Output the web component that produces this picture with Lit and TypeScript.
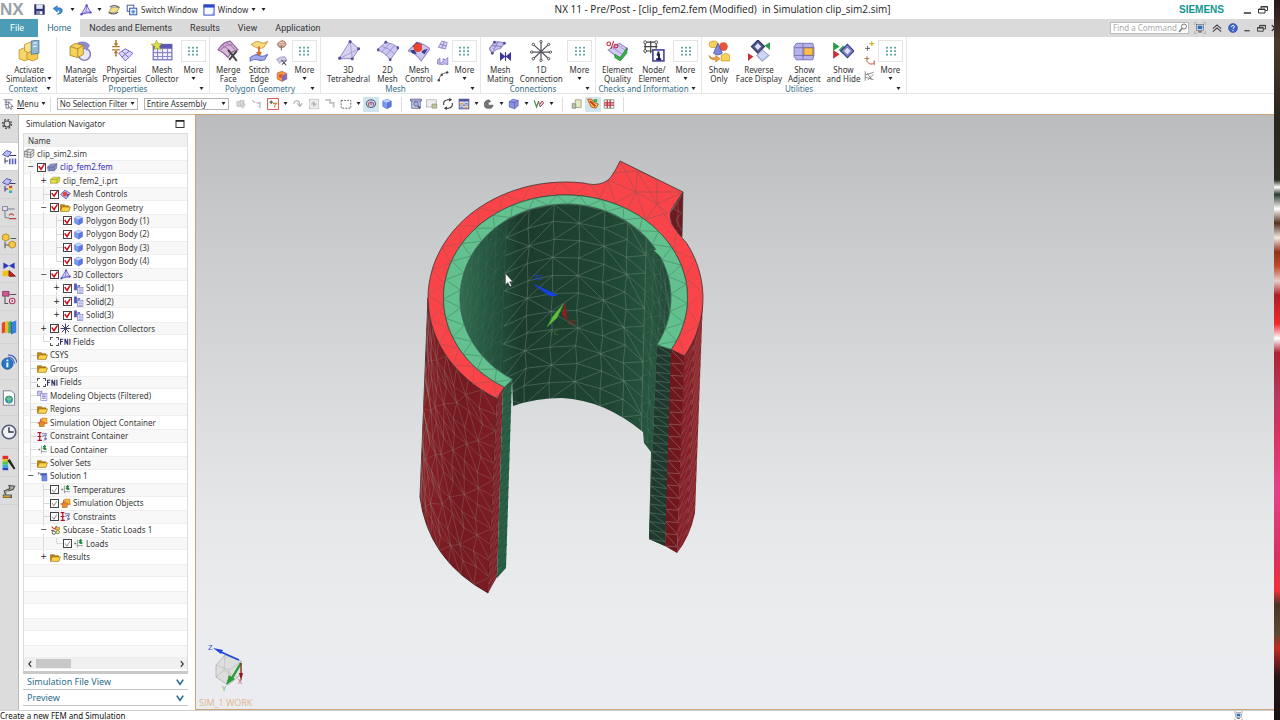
import { LitElement, html, svg, css, nothing } from "lit";
import { customElement } from "lit/decorators.js";
import { classMap } from "lit/directives/class-map.js";
import { styleMap } from "lit/directives/style-map.js";

/* ---------- icons ---------- */

const cube = svg`<path d="M3 5l7-3 7 3v9l-7 4-7-4z" fill="#7c9af0" stroke="#4a62c4"/><path d="M3 5l7 3 7-3-7-3z" fill="#c3d3ff"/><path d="M10 8l7-3v9l-7 4z" fill="#5876dc"/>`;
const folder = svg`<path d="M1 5h7l2 2h6v9H1z" fill="#c98a10" stroke="#7a5200"/><path d="M4 9h15l-3 8H1z" fill="#ffd54a" stroke="#8a6000"/>`;
const load = svg`<path d="M2 10h4M4 8v4M8 3v14M8 14h10" stroke="#555" fill="none"/><path d="M11 9l5-5M11 4l6 6M14 2v9" stroke="#1b8a3a" stroke-width="2.4"/>`;
const simobj = svg`<path d="M1 11h18M7 3v14" stroke="#c22" stroke-width="2"/><rect x="9" y="2" width="9" height="9" fill="#ffb53a" stroke="#b36b00"/><rect x="4" y="9" width="9" height="8" fill="#f08a28" stroke="#a85a00"/>`;
const constr = svg`<path d="M5 2v16M1 3h7M1 10h7M1 17h8" stroke="#b3122d" stroke-width="2.2"/><path d="M9 5h9M9 10l8-3-3 7h4l-6 3" stroke="#5c5fa8" fill="none" stroke-width="1.6"/>`;
const tets = svg`<path d="M2 17L11 2l7 12z" fill="#d9d3fb" stroke="#5a4fc0" stroke-width="1.4"/><path d="M11 2l-1 11-8 4M10 13l8 1" stroke="#5a4fc0" fill="none"/><circle cx="2.500" cy="17" r="2" fill="#5a4fc0"/><circle cx="11" cy="2.500" r="2" fill="#5a4fc0"/><circle cx="17.500" cy="14" r="2" fill="#5a4fc0"/>`;
const star = svg`<path d="M10 1v18M1 10h18M3.500 3.500l13 13M16.500 3.500l-13 13" stroke="#3f3f66" stroke-width="1.8"/>`;
const mon = svg`<path d="M1 5V1h4M15 1h4v4M19 15v4h-4M5 19H1v-4" fill="none" stroke="#999"/><rect x="4" y="4" width="12" height="10" fill="#eef" stroke="#555"/><rect x="6" y="6" width="8" height="6" fill="#2d6fb8"/><path d="M7 16.500h6" stroke="#555" stroke-width="2"/>`;

const I: Record<string, unknown> = {
  cube, folder, load, simobj, constr, tets, star, mon,
  save: svg`<path d="M2 2h14l2 2v14H2z" fill="#2b2f6b"/><rect x="5" y="2" width="10" height="7" fill="#dfe6f5"/><rect x="5" y="12" width="10" height="6" fill="#8990b8"/><rect x="11" y="13" width="3" height="4" fill="#fff"/>`,
  undo: svg`<path d="M3 8l6-4v3q8-1 7 5-1 4-7 4 5-2 3-5-1-1-3-1v3z" fill="#3c8ed8" stroke="#1d5fa8" stroke-width=".8"/>`,
  eraser: svg`<path d="M2 14l5-8h11l-5 8z" fill="#f3e07a" stroke="#777"/><path d="M4 6q6-5 13 0M16 13q-6 5-13 1" stroke="#555" stroke-width="1.500" fill="none"/>`,
  switchwin: svg`<rect x="2" y="2" width="11" height="10" fill="#fff" stroke="#3a5aa0" stroke-width="1.6"/><rect x="6" y="7" width="12" height="11" fill="#dde8fb" stroke="#3a5aa0" stroke-width="1.6"/><path d="M9 13h6M12 10v6" stroke="#2b6fc0" stroke-width="1.6"/>`,
  win: svg`<rect x="1.500" y="1.500" width="17" height="17" fill="#f4f8ff" stroke="#2d48c8" stroke-width="1.6"/><path d="M1 1h18v5H1z" fill="#2d48c8"/><path d="M14 18q4-1 4-5" fill="#bcd" stroke="#789"/>`,
  activate: svg`<path d="M1 9l5-2 5 2v8l-5 2-5-2z" fill="#f8d66a" stroke="#b88d22" stroke-width=".7"/><path d="M6 4l5-2 5 2v6l-5 2-5-2z" fill="#fbe28c" stroke="#b88d22" stroke-width=".7"/><path d="M8 12l5-2 5 2v5l-5 2-5-2z" fill="#f3c94e" stroke="#b88d22" stroke-width=".7"/><path d="M12 1l7-1v12l-7 1z" fill="#8fb7d6" stroke="#4d7799" stroke-width=".8"/><path d="M14 3l3-.5M14 6l3-.5" stroke="#fff"/>`,
  materials: svg`<circle cx="14" cy="13" r="5.500" fill="#e8e8f6" stroke="#7d7db5" stroke-width="1.3"/><path d="M8 2q8-2 11 3l-3 5q-2-5-8-4z" fill="#8d8ad0"/><path d="M1 6l5-3 7 2v8l-5 3-7-2z" fill="#f5d25c" stroke="#ae861e" stroke-width=".8"/><path d="M1 6l7 2 5-3M8 8v8" stroke="#ae861e" fill="none" stroke-width=".8"/>`,
  physical: svg`<g stroke="#6c62c4" stroke-width=".8" fill="#d9d5f8"><path d="M7 12l6-4 7 4-7 7z"/><path d="M10 10l6 6M16.500 10L10 15.500"/></g><path d="M1 6h7M1 9h7" stroke="#b07a2a" stroke-width="1.2"/><path d="M4.500 0v4M4.500 15v-4" stroke="#b07a2a" stroke-width="1.4"/><path d="M2.500 3h4l-2 3zM2.500 12h4l-2-3z" fill="#b07a2a"/>`,
  collector: svg`<rect x="2" y="4" width="17" height="14" fill="#f4f2ff" stroke="#635fb5"/><path d="M2 4h17v4H2z" fill="#5c58b0"/><path d="M2 11.500h17M2 15h17M6 8v10M10.500 8v10M15 8v10" stroke="#8a86cc"/><path d="M5 0l1.500 3.500L10 3 7.500 6 9 9 5.500 7.500 3 9l.5-3L0 4l3.500-.5z" fill="#d9e04a" stroke="#8fa020" stroke-width=".5"/>`,
  merge: svg`<path d="M1 9Q5 2 12 1q3 3 7 8-6 1-9 7-4-5-9-7z" fill="#d8b8d8" stroke="#8c6098"/><path d="M5 5q6 3 9 8M9 3q6 3 8 7M3 9q5-5 11-5" stroke="#a87bb4" fill="none"/><path d="M10 9l8 10M18 10l-7 8" stroke="#444" stroke-width="1.8"/>`,
  stitch: svg`<path d="M3 4q5-4 8-2 4 2 7-1l-4 6q-4 1-6 0-3-1-5-3z" fill="#f8dc7c" stroke="#d0a860"/><path d="M10 6v7M8 11l2 3 2-3" stroke="#d0702a" stroke-width="1.6" fill="none"/><path d="M2 16q5-4 8-2 4 2 8-1l-3 5q-4 1-6 0-3-1-7 1z" fill="#a5abec" stroke="#6a70c4"/>`,
  p1: svg`<path d="M2 7q4-6 9-6 5 1 6 6-2 6-8 6-5 0-7-6z" fill="#cf9f86" stroke="#8a5a48"/><path d="M9 7v10" stroke="#777" stroke-width="2"/><path d="M6 4h7M5 8h9" stroke="#fff"/>`,
  p2: svg`<path d="M1 7q6-5 14-4l3 6q-8-1-12 5z" fill="#cfcbe8" stroke="#7773a8"/><path d="M9 8l8 9M17 9l-7 7" stroke="#555" stroke-width="1.7"/>`,
  p3: svg`<path d="M2 5l8-3 8 4v9l-8 4-8-4z" fill="#f0984a" stroke="#a85a20"/><path d="M10 9l8-3v9l-8 4z" fill="#8068c0"/><circle cx="8" cy="10" r="3.500" fill="#e05a30"/>`,
  tet3d: svg`<path d="M1 17L11 1l8 7-6 9z" fill="#d6d2f2" stroke="#8f8ab8" stroke-width=".9"/><path d="M11 1l2 16M1 17l18-9" stroke="#9a95cc" stroke-width=".7" fill="none"/><g fill="#57519c"><circle cx="11" cy="1.500" r="1.400"/><circle cx="1.500" cy="16.500" r="1.400"/><circle cx="18.700" cy="8" r="1.400"/><circle cx="13" cy="17" r="1.400"/></g>`,
  mesh2d: svg`<path d="M0 9L8 2q6 1 12 5l-8 11Q7 11 0 9z" fill="#cdc8f2" stroke="#8f8ac4" stroke-width=".9"/><path d="M4 5.500q7 2 12 7M12 3q-4 4-8 8M16 5L8 14" stroke="#8a84c4" stroke-width=".7" fill="none"/><g fill="#57519c"><circle cx="8" cy="2" r="1.300"/><circle cx="1" cy="9" r="1.300"/><circle cx="19" cy="7" r="1.300"/><circle cx="12" cy="18" r="1.300"/></g>`,
  control: svg`<path d="M0 10L8 2q6 1 12 6l-8 11Q7 12 0 10z" fill="#cdc8f2" stroke="#8f8ac4"/><path d="M8 2l5 2-4 4-5-2zM14 9l4-1-3 5-3-2zM2 9l4 0 2 4-4-1z" fill="#3d3a88"/><circle cx="9" cy="7" r="4" fill="#e8452e"/>`,
  m1: svg`<path d="M2 12l6-10 9 2-3 11z" fill="#d9d5f5" stroke="#5f58a8"/><path d="M5 7l10 3M12 3L8 14" stroke="#5f58a8"/>`,
  m2: svg`<path d="M1 8l4-3v9l5-3V6l4 2 4-4v12l-5-1-4 1-8-1z" fill="#c5bff0" stroke="#5f58a8"/>`,
  m3: svg`<path d="M3 18Q4 6 17 4" stroke="#555" stroke-width="1.500" fill="none"/><g fill="#444"><circle cx="3" cy="17" r="2"/><circle cx="8" cy="8" r="2"/><circle cx="17" cy="4" r="2"/></g>`,
  mating: svg`<path d="M0 8l5-6q5-1 9 1l-4 5q-4 0-7 4z" fill="#c9c4f0" stroke="#8a84c0"/><path d="M3 5l9 1M8 2L4 9" stroke="#8a84c0"/><g fill="#57519c"><circle cx="5" cy="2" r="1.300"/><circle cx="14" cy="3" r="1.300"/><circle cx="3" cy="12" r="1.300"/></g><path d="M10 11l5 4-5 4zM20 11l-5 4 5 4z" fill="#3b35a0"/><path d="M15 11v8" stroke="#3b35a0"/>`,
  conn1d: svg`<path d="M10 1v18M1 11h18M3 4l14 13M17 4L3 17" stroke="#55555c" stroke-width="1.1"/><g fill="#fff" stroke="#444" stroke-width=".8"><circle cx="10" cy="1.500" r="1.100"/><circle cx="10" cy="18.500" r="1.100"/><circle cx="1.500" cy="11" r="1.100"/><circle cx="18.500" cy="11" r="1.100"/><circle cx="3" cy="4" r="1.100"/><circle cx="17" cy="4" r="1.100"/><circle cx="3" cy="17" r="1.100"/><circle cx="17" cy="17" r="1.100"/></g>`,
  quality: svg`<path d="M2 9l10-6 8 5-8 9z" fill="#d0caf0" stroke="#8f8ac4"/><path d="M6 7l9 6M10 4l8 6" stroke="#8a84c4" stroke-width=".7"/><path d="M8 13l5 3 6-9v5l-6 7-5-3z" fill="#35b34a" stroke="#1c7a30" stroke-width=".6"/><g fill="none" stroke="#c8283c" stroke-width="1"><circle cx="2.500" cy="3.500" r="1.700"/><path d="M7 1L4.500 8"/><circle cx="9" cy="5.500" r="1.700"/></g>`,
  node: svg`<path d="M1 2h12M1 10h9M2 1v11M7 1v11M12 1v7M1 6h12" stroke="#444" stroke-width="1.1" fill="none"/><g fill="#fff" stroke="#444" stroke-width=".8"><circle cx="2" cy="2" r="1.300"/><circle cx="12" cy="2" r="1.300"/><circle cx="2" cy="10" r="1.300"/></g><rect x="9" y="9" width="10" height="10" fill="#fff" stroke="#4b489c" stroke-width="1.500"/><path d="M14 10.500v2M12.500 13.500h2V17M12 17.500h4.500" stroke="#1b1a50" stroke-width="1.800" fill="none"/>`,
  showonly: svg`<ellipse cx="5" cy="4" rx="4" ry="3" fill="#f7d25a" stroke="#b98c1e" stroke-width=".6"/><circle cx="14" cy="6" r="4" fill="#e8553a"/><path d="M5 12l4-9 4 9q-4 3-8 0z" fill="#8086dc" stroke="#4a4fa8" stroke-width=".7"/><path d="M1 14q2 3 6 2v-2l4 3-4 3v-2q-6 0-6-4z" fill="#f0a040" stroke="#b06a18" stroke-width=".5"/><path d="M12 14l4-2 4 2v5h-8z" fill="#f7d25a" stroke="#b98c1e" stroke-width=".6"/>`,
  reverse: svg`<path d="M3 6l6-6 6 6-6 6z" fill="#55598f" stroke="#2e3166"/><path d="M6 6l3-3 3 3-3 3z" fill="#dfe1fb"/><path d="M8 14l5-5 6 5-6 5z" fill="#cfd5f5" stroke="#9aa2d0"/><path d="M20 2v7l-5-4z" fill="#2f9a4a"/><path d="M0 12v7l5-4z" fill="#c8313c"/>`,
  adjacent: svg`<path d="M3 3h15l1 4v7l-1 4H3l-2-3V6z" fill="#b5b2ea" stroke="#6f6cb8" stroke-width=".8"/><path d="M10 7h8v7h-8z" fill="#ffc04a" stroke="#b97a18" stroke-width=".8"/><path d="M1 7h18M1 14h18M9 3v15" stroke="#6f6cb8" stroke-width=".8"/>`,
  hide: svg`<path d="M1 2l6 4-6 4z" fill="#2f9a4a"/><path d="M1 9l6 4-6 4z" fill="#c8313c"/><path d="M6 9l4-4 4 4-4 4z" fill="#3aa655"/><path d="M8 10l6-6 6 6-6 6z" fill="#7d82cf" stroke="#3a3f8a"/><path d="M11 10l3-3 3 3-3 3z" fill="#dfe1fb"/>`,
  u1: svg`<path d="M2 14h8M6 10v8" stroke="#555" stroke-width="1.500"/><path d="M13 2v8M9 6h8" stroke="#c8b030" stroke-width="1.800"/>`,
  u2: svg`<path d="M5 2v10M1 6h8" stroke="#a86a3a" stroke-width="1.500"/><path d="M6 12q6 6 11 1M17 9v8" stroke="#c8513c" stroke-width="1.600" fill="none"/>`,
  u3: svg`<path d="M2 2v16M2 8l14-4M2 12l14 4M6 17L16 7M5 5l8 11" stroke="#666" stroke-width="1.200"/>`,
  more: svg`<g fill="#4f9a9a"><rect x="3" y="4" width="2.500" height="2.500"/><rect x="8.750" y="4" width="2.500" height="2.500"/><rect x="14.500" y="4" width="2.500" height="2.500"/><rect x="3" y="9" width="2.500" height="2.500"/><rect x="8.750" y="9" width="2.500" height="2.500"/><rect x="14.500" y="9" width="2.500" height="2.500"/><rect x="3" y="14" width="2.500" height="2.500"/><rect x="8.750" y="14" width="2.500" height="2.500"/><rect x="14.500" y="14" width="2.500" height="2.500"/></g>`,
  menu: svg`<path d="M1 3h15M3 7h9M3 11h6M5 3v14h4" stroke="#7a7a92" stroke-width="1.600" fill="none"/><path d="M9 7l8 7-4 0 2 4-2 1-2-4-2 2z" fill="#fff" stroke="#44445c"/>`,
  g1: svg`<path d="M3 6h7v8H3zM8 4h7v7M12 8l5 3-4 6-4-4" fill="#d6d6d6" stroke="#b0b0b0"/>`,
  g2: svg`<path d="M2 4l5 4M9 8h8M13 8l3 5M13 13l3 4" stroke="#b8b8b8" stroke-width="2" fill="none"/>`,
  g3: svg`<rect x="1" y="1" width="18" height="18" fill="#fff" stroke="#d8423c" stroke-width="1.500"/><path d="M4 7h6M7 4v6" stroke="#444" stroke-width="1.600"/><path d="M10 9h6l-3 3v4" stroke="#d08030" stroke-width="1.800" fill="none"/>`,
  g4: svg`<path d="M3 10q1-7 8-5l2 6M9 9l4 5 4-5" stroke="#aaa" stroke-width="1.800" fill="none"/>`,
  g5: svg`<rect x="2" y="2" width="16" height="16" fill="#eee" stroke="#b4b4b4"/><path d="M10 5v10M5 10h10M7 7l6 6" stroke="#a8a8a8" stroke-width="1.500"/>`,
  g6: svg`<path d="M2 3h8v5h6v8" stroke="#c0c0c0" stroke-width="3" fill="none"/>`,
  lasso: svg`<rect x="2" y="4" width="16" height="13" fill="none" stroke="#555" stroke-width="1.500" stroke-dasharray="3 2"/>`,
  snap: svg`<path d="M2 10q1-7 8-7t8 7q-1 6-8 6t-8-6z" fill="#cdd3e6" stroke="#4e5575" stroke-width="1.600"/><path d="M5 9q5-4 10 0M6 13V9M14 13V9M10 12V7" stroke="#a04060" stroke-width="1.500" fill="none"/>`,
  v1: svg`<path d="M1 2h18v3H1zM3 5v12h14V5" fill="#e4e4fa" stroke="#55558c" stroke-width="1.500"/><circle cx="10" cy="10" r="4" fill="#9fb2e8" stroke="#334"/><path d="M13 13l4 4" stroke="#334" stroke-width="2"/>`,
  v2: svg`<rect x="1" y="3" width="16" height="12" fill="#eee" stroke="#999"/><path d="M10 10h8v7h-8z" fill="#b8c890" stroke="#888"/>`,
  v3: svg`<path d="M3 12Q1 4 10 3h3M17 8q2 8-7 9H7" stroke="#333" stroke-width="1.800" fill="none"/><path d="M12 0l5 3-5 3zM8 14l-5 3 5 3z" fill="#333"/>`,
  v4: svg`<rect x="2" y="2" width="16" height="16" fill="#fff" stroke="#3e4680" stroke-width="1.500"/><path d="M2 2h16v4H2z" fill="#4e56a0"/><path d="M2 12h16M10 6v12" stroke="#3e4680"/><path d="M4 8h4v3H4zM12 14h4v3h-4z" fill="#e08a30"/><path d="M12 8h4v3h-4zM4 14h4v3H4z" fill="#5a78d8"/>`,
  v5: svg`<path d="M3 15Q0 4 10 3l3 3q-6 1-4 6l8 0-3 5H6z" fill="#777" stroke="#444"/>`,
  v6: svg`<path d="M2 6l6-4 9 2v9l-6 5-9-3z" fill="#8c94e0" stroke="#4a4fa8"/><path d="M2 6l9 2 6-4M11 8v10" stroke="#4a4fa8" fill="none"/>`,
  v7: svg`<path d="M2 4l4 11 3-9" stroke="#3f8a4a" stroke-width="2" fill="none"/><path d="M9 5l3 10 6-7-3-3-3 5" stroke="#a0404c" stroke-width="1.600" fill="#ddd"/>`,
  w1: svg`<path d="M7 3h10v13H7z" fill="#e4e9c8" stroke="#77804a"/><path d="M2 9l6 1v7H2z" fill="#b8c8a0" stroke="#667"/>`,
  w2: svg`<path d="M1 2h7l3 5 8 3-4 7-8-2z" fill="#f2d23c" stroke="#b3302c" stroke-width="1.300"/><path d="M5 5l9 9" stroke="#d03030" stroke-width="3"/><path d="M11 2h6v5h-6z" fill="#4aa84a"/>`,
  w3: svg`<path d="M2 3h16v14H2z" fill="#fff" stroke="#2d7a3c"/><path d="M2 8h16M2 12h16M7 3v14M12 3v14" stroke="#c02a38" stroke-width="2"/>`,
  gear: svg`<circle cx="10" cy="10" r="5" fill="none" stroke="#444" stroke-width="2"/><circle cx="10" cy="10" r="7.500" fill="none" stroke="#444" stroke-width="2.200" stroke-dasharray="2.900 3"/>`,
  nav1: svg`<path d="M2 7l5-5 6 2-4 6z" fill="#b9bdf2" stroke="#4b50b4" stroke-width="1.200"/><path d="M11 8h8M5 11v7M5 15h4" stroke="#3a3a70" stroke-width="1.300"/><path d="M10 12h2v7h-2zM13.500 12h2v7h-2zM17 12h2v7h-2z" fill="#5a60c0"/>`,
  nav2: svg`<path d="M2 7l5-5 6 2-4 6z" fill="#b9bdf2" stroke="#4b50b4" stroke-width="1.200"/><path d="M11 8h7M5 11v7M5 15h4" stroke="#3a3a70" stroke-width="1.300"/><path d="M10 11h4v3h-4z" fill="#e04030"/><path d="M10 14h4v3h-4z" fill="#f0d030"/><path d="M10 17h4v3h-4z" fill="#38b0d0"/>`,
  nav3: svg`<rect x="2" y="2" width="6" height="5" fill="#dfe2ee" stroke="#70768c"/><path d="M5 7v9h5M8 5h9" stroke="#70768c" stroke-width="1.200" fill="none"/><path d="M10 13q3-4 6 0M10 17h9" stroke="#c04040" stroke-width="1.500" fill="none"/>`,
  nav4: svg`<path d="M2 3l4-2 4 2v5l-4 2-4-2zM10 12l4-2 4 2v5l-4 2-4-2z" fill="#f6c844" stroke="#a87c14"/><path d="M5 11v8M5 15h5M12 7h7" stroke="#555" stroke-width="1.300"/>`,
  nav5: svg`<path d="M3 2l7 4-7 4zM17 2l-7 4 7 4z" fill="#2c38b8"/><path d="M2 12h8v7H2z" fill="#f2c020"/><path d="M10 19v-7l8 7z" fill="#d02020" stroke="#601010"/>`,
  nav6: svg`<path d="M2 3h8v6H2z" fill="#d05a90" stroke="#803058"/><path d="M5 10v8h4M11 7h8" stroke="#555" stroke-width="1.300" fill="none"/><circle cx="14" cy="15" r="3.500" fill="#f2e4ea" stroke="#b03060" stroke-width="1.300"/><circle cx="14" cy="15" r="1.200" fill="#b03060"/>`,
  books: svg`<path d="M1 5l4-2v14l-4 1z" fill="#e04a30"/><path d="M5 4l4-2v15l-4 1z" fill="#f2b82c"/><path d="M9 4l4-2v15l-4 1z" fill="#46b04c"/><path d="M13 4l6-2v15l-6 2z" fill="#3b7fe0"/><path d="M13 4v15" stroke="#174a9c"/>`,
  info: svg`<circle cx="8" cy="12" r="7" fill="#2576c8" stroke="#14508c"/><path d="M8 7v2M8 10.500v6" stroke="#fff" stroke-width="2.400"/><path d="M9 4q6 0 8 8M9 1q9 0 11 10" stroke="#4464c8" stroke-width="1.500" fill="none"/>`,
  web: svg`<path d="M3 1h10l4 4v14H3z" fill="#fff" stroke="#667"/><circle cx="10" cy="12" r="4.500" fill="#3c9ac8" stroke="#286"/><path d="M7 10q3 4 6 0M10 8v8" stroke="#7fd070" stroke-width="1.500" fill="none"/>`,
  clock: svg`<circle cx="10" cy="10" r="8.500" fill="#f2f4fb" stroke="#555c78" stroke-width="2"/><path d="M10 4v6h6" stroke="#333" stroke-width="1.800" fill="none"/>`,
  rainbow: svg`<path d="M2 1h7v4H2z" fill="#e03030"/><path d="M2 5h7v3H2z" fill="#f0c020"/><path d="M2 8h7v4H2z" fill="#50c840"/><path d="M2 12h7v4H2z" fill="#30b0d8"/><path d="M2 16h7v3H2z" fill="#3040c0"/><path d="M8 7l3-2 7 12-2 1z" fill="#222"/>`,
  robot: svg`<path d="M3 18h10v-3H3zM6 15l-2-5 7-3-1-4 7 1-2 4-6 2" fill="#b4b4b0" stroke="#55554c" stroke-width="1.500"/><path d="M3 17h8" stroke="#d0a020" stroke-width="2"/>`,
  sim: svg`<path d="M1 6l6-4 11 1v11l-6 4-11-2z" fill="#e6e6e6" stroke="#555"/><path d="M1 6l11 2 6-5M12 8v10M6 7v10M1 11l11 2 6-5M9 2L4 6.500" stroke="#555" fill="none"/>`,
  fem: svg`<path d="M1 9l5-5 12-1-1 9-4 4H2z" fill="#8e97cc" stroke="#4a4f80"/><path d="M1 9h12l5-6M13 9v7M5 9v7M9 9v7" stroke="#4a4f80" fill="none"/>`,
  prt: svg`<path d="M1 8l5-4h12l-1 8-4 3H1z" fill="#e0e040" stroke="#8a8a2a"/><path d="M1 8h12l5-4M13 8v7" stroke="#8a8a2a" fill="none"/>`,
  mc: svg`<path d="M1 10L9 2l10 6-8 10z" fill="#b8b0ea" stroke="#3a3488"/><circle cx="9" cy="9" r="4" fill="#e04838"/><path d="M13 10l4-1-4 5z" fill="#2e2b78"/>`,
  solid: svg`<path d="M2 1h5v12H2zM8 4h5v3H8z" fill="#5057b4"/><rect x="8" y="8" width="10" height="11" fill="#f0f2ff" stroke="#5860b8"/><path d="M10 11h6M10 14h6M10 17h6" stroke="#5860b8"/>`,
  field: svg`<path d="M1 5v11M1 6h5M1 10h4M9 5v11M9 5l5 11M14 5v11M18 5v11" stroke="#33336a" stroke-width="2"/>`,
  modeling: svg`<path d="M1 2h8v8H1z" fill="#c8c4f4" stroke="#6660c0"/><rect x="7" y="6" width="11" height="13" fill="#fff" stroke="#6660c0"/><path d="M9 9h7M9 12h7M9 15h7" stroke="#6660c0" stroke-width="1.500"/>`,
  solution: svg`<path d="M1 4h5M3 2v5" stroke="#555"/><path d="M6 4h12v4H6z" fill="#3c58c0"/><path d="M9 8h9v10H9z" fill="#6f8ae4" stroke="#3c58c0"/>`,
  subcase: svg`<path d="M3 3l4 4M12 2l-4 6M2 10h5" stroke="#c83030" stroke-width="2"/><path d="M10 4h7v5h-7z" fill="#f2c040" stroke="#806010"/><circle cx="7" cy="14" r="3" fill="#fff" stroke="#444" stroke-width="1.500"/><circle cx="14" cy="13" r="3" fill="#ff8" stroke="#664" stroke-width="1.500"/>`,
  minimize: svg`<path d="M3 15h12" stroke="#333" stroke-width="2.500"/>`,
  restore: svg`<path d="M6 7V3h13v8h-4M6 4h13" fill="none" stroke="#333" stroke-width="2"/><path d="M1 8h13v8H1zM1 9h13" fill="none" stroke="#333" stroke-width="2"/>`,
  search: svg`<circle cx="12" cy="7" r="5" fill="#fff" stroke="#777" stroke-width="2"/><path d="M8 11l-6 7" stroke="#777" stroke-width="3"/>`,
  up: svg`<path d="M3 11l7-6 7 6M3 16l7-6 7 6" fill="none" stroke="#444" stroke-width="1.800"/>`,
  help: svg`<circle cx="10" cy="10" r="9" fill="#3f63c8" stroke="#27408c"/><path d="M7 8q0-3 3-3t3 2.500q0 1.500-3 3.500v1M10 14v2.400" stroke="#fff" stroke-width="2" fill="none"/>`,
  chevron: svg`<path d="M2 4l8 12 8-12" fill="none" stroke="#27698a" stroke-width="4"/>`,
  square: svg`<rect x="2" y="3" width="16" height="14" fill="#fff" stroke="#222" stroke-width="1.800"/><path d="M2 4h16" stroke="#222" stroke-width="3"/>`,
  left: svg`<path d="M13 3l-6 7 6 7" fill="none" stroke="#333" stroke-width="3"/>`,
  right: svg`<path d="M7 3l6 7-6 7" fill="none" stroke="#333" stroke-width="3"/>`,
  close: svg`<path d="M2 3l14 14M16 3L2 17" stroke="#222" stroke-width="3"/>`,
};

const icon = (name: string, size = 12) =>
  html`<svg class="icon" width=${size} height=${size} viewBox="0 0 20 20" aria-hidden="true">${I[name]}</svg>`;
const caret = html`<svg class="caret" width="5" height="4" viewBox="0 0 5 4" aria-hidden="true"><path d="M.5 0h4L2.500 3z" fill="#222" /></svg>`;

/* ---------- ribbon ---------- */

type Cmd = { icon: string; label: string[]; drop?: boolean } | { stack: string[] } | { more: true };
interface Group { name: string; width: number; items: Cmd[]; }

const c = (i: string, ...label: string[]): Cmd => ({ icon: i, label });
const more: Cmd = { more: true };

const GROUPS: Group[] = [
  { name: "Context", width: 57, items: [{ icon: "activate", label: ["Activate", "Simulation"], drop: true }] },
  { name: "Properties", width: 153, items: [c("materials", "Manage", "Materials"), c("physical", "Physical", "Properties"), c("collector", "Mesh", "Collector"), more] },
  { name: "Polygon Geometry", width: 111, items: [c("merge", "Merge", "Face"), c("stitch", "Stitch", "Edge"), { stack: ["p1", "p2", "p3"] }, more] },
  { name: "Mesh", width: 160, items: [c("tet3d", "3D", "Tetrahedral"), c("mesh2d", "2D", "Mesh"), c("control", "Mesh", "Control"), { stack: ["m1", "m2", "m3"] }, more] },
  { name: "Connections", width: 115, items: [c("mating", "Mesh", "Mating"), c("conn1d", "1D", "Connection"), more] },
  { name: "Checks and Information", width: 106, items: [c("quality", "Element", "Quality"), c("node", "Node/", "Element"), more] },
  { name: "Utilities", width: 205, items: [c("showonly", "Show", "Only"), c("reverse", "Reverse", "Face Display"), c("adjacent", "Show", "Adjacent"), c("hide", "Show", "and Hide"), { stack: ["u1", "u2", "u3"] }, more] },
];

/* ---------- navigator tree ---------- */

type Check = "on" | "soft" | "none";
interface Row { t: string; d: number; i: string; open?: "+" | "-"; check?: Check; link?: boolean; }

const ROWS: Row[] = [
  { t: "clip_sim2.sim", d: 0, i: "sim" },
  { t: "clip_fem2.fem", d: 1, i: "fem", open: "-", check: "on", link: true },
  { t: "clip_fem2_i.prt", d: 2, i: "prt", open: "+" },
  { t: "Mesh Controls", d: 2, i: "mc", check: "on" },
  { t: "Polygon Geometry", d: 2, i: "folder", open: "-", check: "on" },
  { t: "Polygon Body (1)", d: 3, i: "cube", check: "on" },
  { t: "Polygon Body (2)", d: 3, i: "cube", check: "on" },
  { t: "Polygon Body (3)", d: 3, i: "cube", check: "on" },
  { t: "Polygon Body (4)", d: 3, i: "cube", check: "on" },
  { t: "3D Collectors", d: 2, i: "tets", open: "-", check: "on" },
  { t: "Solid(1)", d: 3, i: "solid", open: "+", check: "on" },
  { t: "Solid(2)", d: 3, i: "solid", open: "+", check: "on" },
  { t: "Solid(3)", d: 3, i: "solid", open: "+", check: "on" },
  { t: "Connection Collectors", d: 2, i: "star", open: "+", check: "on" },
  { t: "Fields", d: 2, i: "field", check: "none" },
  { t: "CSYS", d: 1, i: "folder" },
  { t: "Groups", d: 1, i: "folder" },
  { t: "Fields", d: 1, i: "field", check: "none" },
  { t: "Modeling Objects (Filtered)", d: 1, i: "modeling" },
  { t: "Regions", d: 1, i: "folder" },
  { t: "Simulation Object Container", d: 1, i: "simobj" },
  { t: "Constraint Container", d: 1, i: "constr" },
  { t: "Load Container", d: 1, i: "load" },
  { t: "Solver Sets", d: 1, i: "folder" },
  { t: "Solution 1", d: 1, i: "solution", open: "-" },
  { t: "Temperatures", d: 2, i: "load", check: "soft" },
  { t: "Simulation Objects", d: 2, i: "simobj", check: "soft" },
  { t: "Constraints", d: 2, i: "constr", check: "soft" },
  { t: "Subcase - Static Loads 1", d: 2, i: "subcase", open: "-" },
  { t: "Loads", d: 3, i: "load", check: "soft" },
  { t: "Results", d: 2, i: "folder", open: "+" },
];
const EMPTY_ROWS = 7;

/** True when a later row continues the branch at the given depth. */
const continues = (index: number, depth: number) => {
  for (let k = index + 1; k < ROWS.length; k++) {
    if (ROWS[k].d < depth) return false;
    if (ROWS[k].d === depth) return true;
  }
  return false;
};

/* ---------- mesh model ---------- */

type Pt = [number, number];
const CX = 565.5, CY = 298;
const OUT: Pt = [137.5, 116], MID: Pt = [122, 103], INN: Pt = [105.5, 94];
const at = (r: Pt, deg: number, depth = 0, dx = -8): Pt => {
  const a = (deg * Math.PI) / 180;
  return [CX + r[0] * Math.cos(a) + dx * depth, CY - r[1] * Math.sin(a) + 195 * depth];
};
const fmt = (p: Pt) => `${p[0].toFixed(1)} ${p[1].toFixed(1)}`;
const arc = (r: Pt, a0: number, a1: number, depth = 0, dx = -8) => {
  const n = Math.ceil(Math.abs(a1 - a0) / 4);
  return Array.from({ length: n + 1 }, (_, k) => fmt(at(r, a0 + ((a1 - a0) * k) / n, depth, dx))).join("L");
};
/** Small repeatable displacement that keeps the triangulation irregular. */
const jit = (i: number, j: number, s: number) => Math.sin(i * 12.9 + j * 78.2) * s;

function wall(r: Pt, a0: number, a1: number, cols: number, rows: number, dx: number, wob: number) {
  const node = (i: number, j: number): Pt => {
    const edge = i === 0 || i === cols || j === 0 || j === rows;
    const p = at(r, a0 + ((a1 - a0) * i) / cols, j / rows, dx);
    return edge ? p : [p[0] + jit(i, j, wob), p[1] + jit(j, i, wob)];
  };
  let d = "";
  for (let i = 0; i < cols; i++)
    for (let j = 0; j < rows; j++) {
      d += `M${fmt(node(i, j + 1))}L${fmt(node(i, j))}L${fmt(node(i + 1, j))}`;
      d += (i + j) % 3 ? `M${fmt(node(i, j))}L${fmt(node(i + 1, j + 1))}` : `M${fmt(node(i + 1, j))}L${fmt(node(i, j + 1))}`;
    }
  return d;
}
function ring(a: Pt, b: Pt, from: number, to: number, n: number) {
  let d = `M${fmt(at(a, from))}`;
  for (let k = 1; k <= n; k++) d += `L${fmt(at(k % 2 ? b : a, from + ((to - from) * k) / n))}`;
  return d;
}
function strip(p0: Pt, p1: Pt, q0: Pt, q1: Pt, n: number) {
  const mix = (a: Pt, b: Pt, t: number): Pt => [a[0] + (b[0] - a[0]) * t, a[1] + (b[1] - a[1]) * t];
  let d = `M${fmt(p0)}`;
  for (let k = 1; k <= n; k++) d += `L${fmt(mix(q0, q1, (k - 0.5) / n))}L${fmt(mix(p0, p1, k / n))}`;
  return d;
}

const model = () => {
  const interior = `M512 379L513 406Q536 398 562 398Q604 400 643 432L644 443L651 452L649 539L665 546L673 350L657 345L${arc(INN, -30, 240)}Z`;
  const leftWall = `M${arc(OUT, 180, 240)}L488 593Q428 560 420 497Z`;
  return svg`
    <defs>
      <clipPath id="inside"><path d=${interior} /></clipPath>
      <clipPath id="leftside"><path d=${leftWall} /></clipPath>
      <linearGradient id="green" x1="0" x2="1"><stop offset="0" stop-color="#2f6b4f"/><stop offset=".2" stop-color="#224c39"/><stop offset=".28" stop-color="#1c3c2d"/><stop offset=".7" stop-color="#1f4633"/><stop offset=".9" stop-color="#27553f"/><stop offset="1" stop-color="#234536"/></linearGradient>
      <linearGradient id="red" x1="0" x2="1"><stop offset="0" stop-color="#8a2029"/><stop offset=".5" stop-color="#741a20"/><stop offset="1" stop-color="#7d1c23"/></linearGradient>
    </defs>
    <path d="M683 192l-1 45-9-9-3-14z" fill="#6d1b22" stroke="#2b2b2b" stroke-width=".6"/>
    <path d="M682 195l-8 14 8 4-6 6 6 12M678 203v24" stroke="#8b5a58" stroke-width=".6" fill="none"/>
    <path d=${interior} fill="url(#green)"/>
    <g clip-path="url(#inside)" fill="none" stroke-width=".6">
      <path d=${wall(INN, 40, 124, 6, 11, -5, 1)} stroke="#7c9184" stroke-opacity=".7"/>
      <path d=${wall(INN, 124, 240, 17, 13, -8, 1)} stroke="#4d7461" stroke-opacity=".45"/>
      <path d=${wall(INN, -30, 40, 9, 14, -8, 1)} stroke="#5f8672" stroke-opacity=".45"/>
    </g>
    <path d="M673 350L657 345L649 539L665 546Z" fill="#21382f"/>
    <path d=${strip([657, 346], [649, 539], [673, 352], [665, 546], 22)} fill="none" stroke="#5d8871" stroke-width=".5"/>
    <path d=${leftWall} fill="url(#red)" stroke="#3a1416" stroke-width=".8"/>
    <g clip-path="url(#leftside)"><path d=${wall(OUT, 180, 240, 8, 12, -8, 2)} fill="none" stroke="#90766c" stroke-opacity=".65" stroke-width=".6"/></g>
    <path d="M497 399L503 388L497 577L488 593Z" fill="#7c2028"/>
    <path d=${strip([497, 399], [488, 593], [503, 388], [497, 577], 22)} fill="none" stroke="#94504e" stroke-width=".5"/>
    <path d="M503 388L512 378L506 568L497 578Z" fill="#2b6147"/>
    <path d=${strip([503, 388], [497, 577], [512, 378], [506, 568], 20)} fill="none" stroke="#1b4a34" stroke-width=".5"/>
    <path d="M671 349L685 356L677 553L665 546Z" fill="#70171d"/>
    <path d=${strip([672, 351], [665, 546], [685, 358], [677, 553], 16)} fill="none" stroke="#96726a" stroke-width=".6"/>
    <path d="M684 356Q702 330 703 297L695 513Q690 537 677 553Z" fill="#842029"/>
    <path d=${strip([685, 359], [677, 553], [694, 340], [687, 535], 18) + strip([694, 340], [687, 535], [703, 300], [695, 510], 18)} fill="none" stroke="#a8635f" stroke-opacity=".7" stroke-width=".5"/>
    <path d=${`M${arc(OUT, -30, 28)}Q676 231 672 224Q668 213 673 207L683 192L620 161Q613 176 608 180Q600 186 588 184L${arc(OUT, 82, 240)}L${arc(MID, 240, -30)}Z`} fill="#f9444a" stroke="#3b3030" stroke-width=".8"/>
    <path d=${ring(OUT, MID, -30, 36, 8) + ring(OUT, MID, 80, 240, 26)} fill="none" stroke="#a0524c" stroke-width=".5"/>
    <path d="M608 180L636 192L620 161M612 173L637 171L636 192L683 192M637 171L657 204L683 192M636 192L657 204L646 219M636 192L615 203L608 180M657 204L668 213L646 219L636 192L628 209M657 204L672 226M590 184L600 198L608 180M637 171L657 180L657 204" fill="none" stroke="#a0524c" stroke-width=".6"/>
    <path d=${`M${arc(MID, -30, 240)}L${arc(INN, 240, 125)}L508 219L${arc(INN, 119, 31)}L653 250L${arc(INN, 26, -30)}Z`} fill="#63c08f" stroke="#28503c" stroke-width=".7"/>
    <path d=${ring(INN, MID, -30, 240, 50)} fill="none" stroke="#3e7c5c" stroke-width=".5"/>
    <path d="M535 285l22 10-7 1z" fill="#1740e0" stroke="#1740e0"/>
    <path d="M564 303l-7 15-10 9 6-11z" fill="#5fc040" stroke="#3f8a30" stroke-width=".6"/>
    <path d="M565 303l2 17-5-6" fill="#8a2020" stroke="#8a2020"/>
    <text x="534" y="280" font-size="8" fill="#1d3fd0">ZC</text>
    <text x="567" y="325" font-size="8" fill="#a02828">XC</text>
    <text x="549" y="335" font-size="8" fill="#3d7a40">YC</text>
    <path d="M505.500 273.500v11l2.500-2 2 4 1.500-.8-2-3.900 3-.3z" fill="#fff" stroke="#444" stroke-width=".4"/>
    <path d="M216 665l9-10 16 6 1 13-14 11-12-8z" fill="#dcdddc" stroke="#aaa" stroke-width=".7"/>
    <path d="M216 665l13 5 13-9M229 670l-1 15M225 655l-1 15 14 8M224 670l-8 7" stroke="#b4b4b4" stroke-width=".6" fill="none"/>
    <path d="M239 660l-18-8" stroke="#1c46d8" stroke-width="1.500"/><path d="M213 648l10 2-2 4z" fill="#1c46d8"/>
    <path d="M241 663l-9 15" stroke="#2c9a38" stroke-width="2.400"/><path d="M226 685l3-10 6 4z" fill="#2c9a38"/>
    <path d="M241 663v12" stroke="#8c1c1c" stroke-width="1.200"/><path d="M239 673h4l-2 8z" fill="#8c1c1c"/>
    <text x="208" y="650" font-size="8" fill="#2a50d0">Z</text>
    <text x="222" y="691" font-size="7" fill="#4c9a50">Y</text>
    <text x="238" y="684" font-size="7" fill="#b04040">X</text>
    <text x="199" y="706" font-size="9" fill="#e0b78c">SIM_1 WORK</text>`;
};

const SIDE: [string, string][] = [
  ["nav1", "Simulation Navigator"], ["nav2", "Post Processing Navigator"], ["nav3", "Part Navigator"], ["nav4", "Assembly Navigator"],
  ["nav5", "Constraint Navigator"], ["nav6", "Reuse Navigator"], ["books", "Reuse Library"], ["info", "HD3D Tools"],
  ["web", "Web Browser"], ["clock", "History"], ["rainbow", "Palette"], ["robot", "Roles"],
];
const TALL = new Set(["info", "web"]);

@customElement("app-root")
export class AppRoot extends LitElement {
  static styles = css`
    :host { display: grid; grid-template-columns: minmax(0, 1fr) 6px; height: 100vh; overflow: hidden; font: 8px/10px "Noto Sans", "Open Sans", sans-serif; color: #333; background: #fff; }
    * { box-sizing: border-box; }
    button, select, input { font: inherit; color: inherit; margin: 0; padding: 0; border: 0; background: none; }
    button { display: inline-flex; align-items: center; white-space: nowrap; }
    .icon, .caret { display: block; flex: none; }
    .window { display: flex; flex-direction: column; min-width: 0; min-height: 0; }
    .desktop { background: linear-gradient(#2a1a1c, #4b3a2c 6%, #2c2620 16%, #2a2c22 25%, #fff 26%, #2b3a30 27%, #fff 29%, #53301c 31%, #f4e8e2 33%, #8f3018 35%, #c04a28 37%, #e8d0cc 39%, #b01c22 41%, #ee2a30 45%, #fff 47%, #b02030 49%, #b83860 55%, #d83060 60%, #e84088 68%, #d83060 77%, #f03038 82%, #4a3424 84%, #5a4a30 88%, #c02a24 90%, #241618 94%, #181012); }

    .title { display: flex; align-items: center; height: 19px; flex: none; }
    .nx { font: bold 17px/19px "Liberation Sans", sans-serif; color: #98a0a8; width: 33px; }
    .quick { display: flex; align-items: center; gap: 5px; }
    .quick button { gap: 3px; }
    .name { flex: 1; text-align: center; font: 10px/19px "Open Sans", sans-serif; color: #222; white-space: pre; margin: 0; }
    .brand { font: bold 10px/19px "Liberation Sans", sans-serif; color: #0f9690; }
    .winbtns { display: flex; gap: 4px; padding: 0 6px 0 18px; }

    .tabs { display: flex; height: 18px; flex: none; background: #dadada; font-family: Roboto, sans-serif; font-size: 9px; align-items: stretch; }
    .tabs button { padding: 0 9px; }
    .tabs .file { background: #4b9cb4; color: #fff; padding: 0 14px 0 10px; }
    .tabs .home { background: #fff; color: #2b6d88; }
    .tools { margin-left: auto; display: flex; align-items: center; gap: 5px; }
    .find { display: flex; align-items: center; height: 12px; background: #fff; border: 1px solid #bbb; }
    .find input { width: 67px; padding-left: 2px; outline: 0; font-family: "Noto Sans", sans-serif; font-size: 8px; }
    .find input::placeholder { color: #aaa; opacity: 1; }
    .tools button { padding: 0; }
    .tools .edge { width: 3px; overflow: hidden; }

    .ribbon { display: flex; height: 57px; flex: none; border-bottom: 1px solid #e4e4e4; }
    .group { display: flex; flex-direction: column; border-right: 1px solid #e6e6e6; flex: none; }
    .cmds { display: flex; justify-content: space-between; padding: 3px 3px 0 4px; height: 48px; }
    .cmd { flex-direction: column; gap: 3px; text-align: center; line-height: 9px; padding: 0 2px; }
    .cmd .cap { display: block; }
    .cmd .line { display: flex; align-items: center; justify-content: center; gap: 1px; height: 9px; }
    .cmd.more { padding: 0; }
    .box { display: flex; align-items: center; justify-content: center; width: 25px; height: 22px; border: 1px solid #e4e4e4; }
    .stack { display: flex; flex-direction: column; gap: 3px; }
    .foot { display: flex; align-items: center; height: 9px; line-height: 9px; color: #34708a; white-space: nowrap; }
    .foot span { flex: 1; text-align: center; }
    .foot .caret { margin-right: 5px; }

    .bar { display: flex; align-items: center; height: 20px; flex: none; padding-left: 3px; }
    .bar .menu { gap: 2px; padding-right: 4px; border-right: 1px solid #ddd; height: 15px; margin-right: 6px; }
    .pick { position: relative; display: flex; align-items: center; margin-right: 6px; }
    .pick select { appearance: none; height: 12px; width: 81px; border: 1px solid #b5b5b5; padding: 0 10px 0 2px; background: #fff; line-height: 10px; }
    .pick.wide { margin-right: 4px; }
    .pick.wide select { width: 85px; }
    .pick .caret { position: absolute; right: 3px; pointer-events: none; }
    .set { display: flex; align-items: center; height: 15px; padding-right: 6px; margin-right: 6px; border-right: 1px solid #ddd; }
    .set button { width: 16px; height: 15px; justify-content: center; }
    .set button.drop { width: 9px; }
    .set button.on { background: #cfe6ec; }

    .main { display: grid; grid-template-columns: 19px 176px minmax(0, 1fr); flex: 1; min-height: 0; }
    .side { background: #dcdcdc; border-right: 1px solid #b9b9b9; border-top: 1px solid #c4c4c4; display: flex; flex-direction: column; }
    .side button { height: 28px; justify-content: center; width: 100%; border-bottom: 1px solid #d2d2d2; }
    .side button.gear { justify-content: flex-start; padding: 0 0 10px 1px; }
    .side button.tall { height: 36px; }
    .side button.mid { height: 33px; }
    .side button.active { background: #fff; }
    .nav { display: flex; flex-direction: column; padding: 0 7px 4px 4px; min-height: 0; border-top: 1px solid #cbb69c; }
    .navhead { display: flex; align-items: center; justify-content: space-between; height: 18px; padding: 0 3px; margin: 0; font-weight: normal; font-size: 8px; }
    .tree { flex: 1; min-height: 0; display: flex; flex-direction: column; border: 1px solid #dcdcdc; border-bottom: 0; }
    .colhead { height: 13px; line-height: 13px; background: #f0f0f0; padding-left: 4px; flex: none; }
    .rows { flex: 1; min-height: 0; display: grid; grid-auto-rows: minmax(0, 1fr); margin: 0; padding: 0; list-style: none; }
    .row { display: flex; align-items: center; min-height: 0; white-space: nowrap; color: #3a3a3a; }
    .row:nth-child(even) { background: #f8f8f8; border-top: 1px solid #efefef; border-bottom: 1px solid #efefef; }
    .row.link { color: #3529b8; }
    .guide { align-self: stretch; width: 13px; flex: none; display: flex; align-items: center; justify-content: center; }
    .guide.v { background: linear-gradient(#d8d8d8, #d8d8d8) 6px 0 / 1px 100% no-repeat; }
    .guide.half { background: linear-gradient(#d8d8d8, #d8d8d8) 6px 0 / 1px 50% no-repeat; }
    .guide b { background: #fff; color: #222; font: 8px/8px "DejaVu Sans", sans-serif; padding: 0; }
    .row:nth-child(even) .guide b { background: #f8f8f8; }
    .guide i { height: 1px; width: 6px; margin-left: 6px; background: #d8d8d8; }
    .row label { display: flex; align-items: center; }
    .row .icon { margin-right: 2px; }
    .row input { appearance: none; width: 9px; height: 9px; margin-right: 1px; border: 1px solid #444; background: #fff; display: block; }
    .row input:checked::after { content: ""; display: block; width: 7px; height: 7px; background: #d0101c; clip-path: polygon(0 40%, 22% 30%, 40% 60%, 85% 0, 100% 10%, 45% 100%); }
    .row input.soft:checked::after { background: #8a8a8a; clip-path: polygon(10% 50%, 22% 45%, 40% 75%, 80% 15%, 90% 20%, 42% 95%); }
    .row input.none { border: 1px dashed #555; }
    .scroll { display: flex; align-items: center; height: 11px; flex: none; background: #f0f0f0; margin-bottom: 2px; }
    .scroll .thumb { flex: none; width: 35px; height: 9px; background: #c8c8c8; margin-left: 1px; margin-right: auto; }
    .scroll button { width: 11px; height: 11px; justify-content: center; }
    .fold { display: flex; justify-content: space-between; height: 16px; flex: none; padding: 0 4px; border-bottom: 1px solid #c4c4c4; color: #2b6d88; font-size: 9px; }
    .fold.first { border-top: 3px solid #c9c9c9; height: 19px; }
    .view { border-left: 1px solid #cba27a; border-top: 1px solid #cba27a; border-bottom: 1px solid #cba27a; background: linear-gradient(#bbbcbe, #c8c9cb 18%, #d8d9db 45%, #e5e7e9 68%, #ebecee 85%, #ebecf0); min-width: 0; min-height: 0; overflow: hidden; }
    .view svg { display: block; width: 100%; height: 100%; font-family: "Open Sans", sans-serif; }
    .status { display: flex; align-items: center; justify-content: space-between; height: 10px; flex: none; padding-right: 31px; border-top: 1px solid #d0d0d0; color: #111; line-height: 9px; }
  `;

  private command(item: Cmd) {
    if ("stack" in item) return html`<div class="stack">${item.stack.map((n) => html`<button aria-label=${n}>${icon(n)}</button>`)}</div>`;
    if ("more" in item)
      return html`<button class="cmd more"><span class="box">${icon("more", 14)}</span><span class="cap"><span class="line">More</span><span class="line">${caret}</span></span></button>`;
    const last = item.label.length - 1;
    return html`<button class="cmd">${icon(item.icon, 22)}<span class="cap">${item.label.map((l, k) => html`<span class="line">${l}${item.drop && k === last ? caret : nothing}</span>`)}</span></button>`;
  }

  private row(r: Row, index: number) {
    const guides = [];
    for (let d = 1; d <= r.d; d++) {
      const own = d === r.d;
      const go = continues(index, d);
      guides.push(html`<span class=${classMap({ guide: true, v: go, half: own && !go })}>${own ? (r.open ? html`<b>${r.open === "-" ? "−" : "+"}</b>` : html`<i></i>`) : nothing}</span>`);
    }
    const box = r.check ? html`<input type="checkbox" class=${r.check} .checked=${r.check !== "none"} />` : nothing;
    return html`<li class=${classMap({ row: true, link: !!r.link })}>${guides}<label>${box}${icon(r.i, 11)}${r.t}</label></li>`;
  }

  private tools(names: string[]) {
    return names.map((n) =>
      n === "v" ? html`<button class="drop" aria-label="Options">${caret}</button>` : html`<button class=${n === "snap" || n === "w2" ? "on" : ""} aria-label=${n}>${icon(n, 12)}</button>`
    );
  }

  render() {
    return html`
      <div class="window">
        <header class="title">
          <span class="nx">NX</span>
          <div class="quick">
            <button aria-label="Save">${icon("save", 13)}</button>
            <button aria-label="Undo">${icon("undo", 14)}</button>
            <button aria-label="Undo list">${caret}</button>
            <button aria-label="Mesh">${icon("tets", 12)}</button>
            <button aria-label="Mesh list">${caret}</button>
            <button aria-label="Erase">${icon("eraser", 14)}</button>
            <button>${icon("switchwin", 12)}Switch Window</button>
            <button>${icon("win", 12)}Window ${caret}</button>
            <button aria-label="Customize">${caret}</button>
          </div>
          <h1 class="name">NX 11 - Pre/Post - [clip_fem2.fem (Modified)  in Simulation clip_sim2.sim]</h1>
          <span class="brand">SIEMENS</span>
          <div class="winbtns"><button aria-label="Minimize">${icon("minimize", 12)}</button><button aria-label="Restore">${icon("restore", 10)}</button></div>
        </header>
        <nav class="tabs">
          <button class="file">File</button><button class="home">Home</button><button>Nodes and Elements</button><button>Results</button><button>View</button><button>Application</button>
          <div class="tools">
            <label class="find"><input type="text" placeholder="Find a Command" aria-label="Find a Command" />${icon("search", 10)}</label>
            <button aria-label="Full screen">${icon("mon", 12)}</button>
            <button aria-label="Collapse ribbon">${icon("up", 12)}</button>
            <button aria-label="Help">${icon("help", 10)}</button>
            <button aria-label="Minimize part">${icon("minimize", 9)}</button>
            <button aria-label="Restore part">${icon("restore", 9)}</button>
            <button class="edge" aria-label="Close part">${icon("close", 8)}</button>
          </div>
        </nav>
        <section class="ribbon">
          ${GROUPS.map((g) => html`<div class="group" style=${styleMap({ width: `${g.width}px` })}>
            <div class="cmds">${g.items.map((i) => this.command(i))}</div>
            <div class="foot"><span>${g.name}</span>${caret}</div>
          </div>`)}
        </section>
        <section class="bar">
          <button class="menu">${icon("menu", 12)}<span><u>M</u>enu</span>${caret}</button>
          <div class="pick"><select aria-label="Selection filter"><option>No Selection Filter</option></select>${caret}</div>
          <div class="pick wide"><select aria-label="Selection scope"><option>Entire Assembly</option></select>${caret}</div>
          <div class="set">${this.tools(["g1", "g2", "g3", "v", "g4", "g5", "g6", "lasso", "v", "snap", "cube"])}</div>
          <div class="set">${this.tools(["v1", "v2", "v3", "v4", "v", "v5", "v", "v6", "v", "v7", "v"])}</div>
          <div class="set">${this.tools(["w1", "w2", "w3"])}</div>
        </section>
        <main class="main">
          <nav class="side">
            <button class="gear" aria-label="Settings">${icon("gear", 12)}</button>
            ${SIDE.map(([n, t]) => html`<button class=${classMap({ active: n === "nav1", tall: TALL.has(n), mid: n === "books" || n === "clock" })} aria-label=${t}>${icon(n, 16)}</button>`)}
          </nav>
          <aside class="nav">
            <h2 class="navhead">Simulation Navigator ${icon("square", 10)}</h2>
            <div class="tree">
              <div class="colhead">Name</div>
              <ul class="rows">
                ${ROWS.map((r, i) => this.row(r, i))}
                ${Array.from({ length: EMPTY_ROWS }, () => html`<li class="row"></li>`)}
              </ul>
              <div class="scroll"><button aria-label="Scroll left">${icon("left", 8)}</button><span class="thumb"></span><button aria-label="Scroll right">${icon("right", 8)}</button></div>
            </div>
            <button class="fold first">Simulation File View ${icon("chevron", 8)}</button>
            <button class="fold">Preview ${icon("chevron", 8)}</button>
          </aside>
          <section class="view"><svg viewBox="196 115 1078 594" preserveAspectRatio="xMinYMin meet" role="img" aria-label="Clip mesh model">${model()}</svg></section>
        </main>
        <footer class="status"><span>Create a new FEM and Simulation</span>${icon("mon", 9)}</footer>
      </div>
      <div class="desktop"></div>
    `;
  }
}
